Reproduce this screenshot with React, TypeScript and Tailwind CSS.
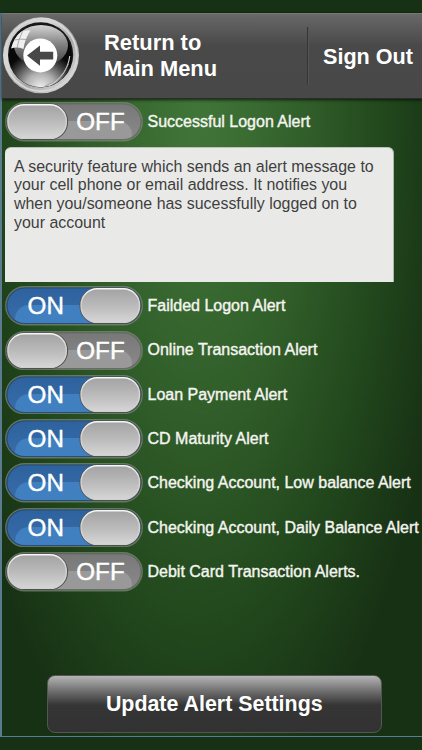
import { useState } from 'react';

type Alert = {
  id: string;
  label: string;
  enabled: boolean;
  description?: string;
};

const initialAlerts: Alert[] = [
  {
    id: 'logon-success',
    label: 'Successful Logon Alert',
    enabled: false,
    description:
      'A security feature which sends an alert message to your cell phone or email address. It notifies you when you/someone has sucessfully logged on to your account',
  },
  { id: 'logon-failed', label: 'Failded Logon Alert', enabled: true },
  { id: 'online', label: 'Online Transaction Alert', enabled: false },
  { id: 'loan', label: 'Loan Payment Alert', enabled: true },
  { id: 'cd', label: 'CD Maturity Alert', enabled: true },
  { id: 'low-balance', label: 'Checking Account, Low balance Alert', enabled: true },
  { id: 'daily-balance', label: 'Checking Account, Daily Balance Alert', enabled: true },
  { id: 'debit', label: 'Debit Card Transaction Alerts.', enabled: false },
];

// Gradients shared by every switch on the page
const SwitchDefs = () => (
  <svg width="0" height="0" className="absolute">
    <defs>
      <linearGradient id="knob" x1="0" y1="0" x2="0" y2="1">
        <stop offset="0" stopColor="#a3a3a3" />
        <stop offset="0.5" stopColor="#bababa" />
        <stop offset="1" stopColor="#d6d6d6" />
      </linearGradient>
      <linearGradient id="knobEdge" x1="0" y1="0" x2="0" y2="1">
        <stop offset="0" stopColor="#f6f6f6" />
        <stop offset="0.35" stopColor="#d6d6d6" />
        <stop offset="1" stopColor="#d0d0d0" />
      </linearGradient>
      <linearGradient id="trackOn" x1="0" y1="0" x2="0" y2="1">
        <stop offset="0" stopColor="#2d629f" />
        <stop offset="1" stopColor="#386da8" />
      </linearGradient>
      <linearGradient id="trackOff" x1="0" y1="0" x2="0" y2="1">
        <stop offset="0" stopColor="#787878" />
        <stop offset="1" stopColor="#8a8a8a" />
      </linearGradient>
      <clipPath id="trackClip">
        <rect x="2" y="2" width="134" height="35.5" rx="17.7" />
      </clipPath>
    </defs>
  </svg>
);

const Switch = ({ on, onToggle }: { on: boolean; onToggle: () => void }) => (
  <button onClick={onToggle} className="shrink-0 cursor-pointer">
    <svg width="138" height="39.5" viewBox="0 0 138 39.5" className="block">
      <rect x="0.9" y="0.9" width="136.2" height="37.7" rx="18.8" fill="none" stroke="#7f8c7c" strokeOpacity="0.7" strokeWidth="1.6" />
      <rect x="2" y="2" width="134" height="35.5" rx="17.7" fill={on ? 'url(#trackOn)' : 'url(#trackOff)'} />
      <g clipPath="url(#trackClip)">
        <rect x="10" y="19" width="117" height="32" rx="14" fill={on ? '#407fc0' : '#999999'} />
      </g>
      <rect x="2" y="2" width="134" height="35.5" rx="17.7" fill="none" stroke={on ? '#2a4c78' : '#6a6a6a'} strokeWidth="1.2" />
      <text
        x={on ? 22.6 : 71.3}
        y="28"
        fontSize="24.2"
        fill="#fff"
        stroke="#fff"
        strokeWidth="0.4"
        fontFamily="'Liberation Sans', Arial, sans-serif"
      >
        {on ? 'ON' : 'OFF'}
      </text>
      <g transform={on ? 'translate(74.2 0)' : 'translate(1 0)'}>
        <rect x="0.3" y="1.4" width="61.8" height="36.6" rx="18" fill="#505050" />
        <rect x="1.9" y="2.8" width="58.4" height="33.6" rx="16.2" fill="url(#knob)" stroke="url(#knobEdge)" strokeWidth="1.4" />
      </g>
    </svg>
  </button>
);

const BackIcon = () => (
  <svg width="78" height="79" viewBox="0 0 78 79" className="block">
    <defs>
      <linearGradient id="ring" x1="0" y1="0" x2="1" y2="1">
        <stop offset="0" stopColor="#a9a9a9" />
        <stop offset="0.3" stopColor="#dcdcdc" />
        <stop offset="0.6" stopColor="#a6a6a6" />
        <stop offset="1" stopColor="#ededed" />
      </linearGradient>
      <radialGradient id="glass" cx="0.5" cy="1.02" r="0.6">
        <stop offset="0" stopColor="#f2f2f2" />
        <stop offset="0.4" stopColor="#b0b0b0" />
        <stop offset="0.78" stopColor="#404040" />
        <stop offset="1" stopColor="#080808" />
      </radialGradient>
      <linearGradient id="gloss" x1="0" y1="0" x2="0" y2="1">
        <stop offset="0" stopColor="#d4d4d4" />
        <stop offset="0.45" stopColor="#858585" />
        <stop offset="1" stopColor="#3c3c3c" />
      </linearGradient>
    </defs>
    <circle cx="39" cy="39.3" r="38" fill="url(#ring)" />
    <circle cx="39" cy="39.3" r="35.8" fill="none" stroke="#d6d6d6" strokeWidth="1.8" />
    <circle cx="38.6" cy="38.8" r="32.6" fill="#181818" />
    <circle cx="38.4" cy="39.8" r="31.4" fill="url(#glass)" />
    <ellipse cx="39" cy="29.5" rx="27" ry="20.5" fill="url(#gloss)" />
    <path d="M47 69.5 Q65 60 67.8 40" fill="none" stroke="#d8d8d8" strokeWidth="1.1" />
    <path d="M43 70 Q60 64 66.5 48" fill="none" stroke="#999" strokeWidth="0.8" />
    <path d="M9 32.5 Q12 21 19 16 Q23 13.5 28.5 14.5 Q23 22 21.5 33 Q15 30.5 9 32.5Z" fill="#efefef" />
    <path d="M20.5 15.5 Q16.5 23 15 32 M12.5 24 Q18.5 22.5 24.5 23.5" fill="none" stroke="#999" strokeWidth="0.8" />
    <circle cx="38.3" cy="39.4" r="17" fill="#fff" />
    <path d="M25 39.4 L38 29.4 V35.8 H51.2 V43.6 H38 V49.8Z" fill="#484848" />
  </svg>
);

export default function App() {
  const [alerts, setAlerts] = useState(initialAlerts);

  const toggle = (id: string) =>
    setAlerts(alerts.map((a) => (a.id === id ? { ...a, enabled: !a.enabled } : a)));

  return (
    <div className="flex h-[750px] w-[422px] flex-col overflow-hidden bg-[#173114] pt-[12.5px] font-['Liberation_Sans',Arial,sans-serif]">
      <SwitchDefs />
      <div className="flex h-[724.5px] flex-col border-b border-l-2 border-[#5b7b8e] bg-[radial-gradient(ellipse_258px_710px_at_195px_100px,#407538_0%,#3a6c32_20%,#2e5a27_48%,#21461c_74%,#173114_100%)]">
        <header className="flex h-[86.5px] shrink-0 items-center border-t border-b border-t-[#777] border-b-[#2b2b2b] bg-linear-to-b from-[#686868] via-[#494949] via-38% to-[#484848] shadow-[0_1px_3px_rgba(0,0,0,0.7)]">
          <button className="cursor-pointer">
            <BackIcon />
          </button>
          <h1 className="ml-[24px] w-[203px] text-[21.9px] leading-[26px] font-bold text-white">
            Return to
            <br />
            Main Menu
          </h1>
          <div className="h-[58px] border-l border-[#353535] border-r border-r-[#555]" />
          <button className="ml-[14px] cursor-pointer pt-0.5 whitespace-nowrap text-[21.6px] font-bold text-white">
            Sign Out
          </button>
        </header>

        <main className="flex flex-1 flex-col gap-[4.8px] pt-[3px] pl-[2.5px]">
          {alerts.map((alert) => (
            <div key={alert.id}>
              <div className="flex items-center gap-[5px]">
                <Switch on={alert.enabled} onToggle={() => toggle(alert.id)} />
                <span className="whitespace-nowrap text-[16px] leading-5 text-[#f4f4f0] [-webkit-text-stroke:0.4px_#f4f4f0]">
                  {alert.label}
                </span>
              </div>
              {alert.description && (
                <p className="mt-[5.5px] h-[134.5px] w-[389.5px] rounded-t-md border-t border-r border-t-[#bcc2b9] border-r-[#aeb5ab] bg-[#e9eae8] px-[9.5px] pt-[9.5px] text-[15.95px] leading-[18.7px] text-[#3f3f3f]">
                  {alert.description}
                </p>
              )}
            </div>
          ))}
        </main>

        <button className="mb-[3px] ml-[44.5px] h-[58px] w-[335.5px] shrink-0 cursor-pointer rounded-lg border border-[#555] bg-linear-to-b from-[#b5b5b5] via-[#353535] via-52% to-[#323232] pt-px text-[21.4px] font-bold text-white">
          Update Alert Settings
        </button>
      </div>
    </div>
  );
}
